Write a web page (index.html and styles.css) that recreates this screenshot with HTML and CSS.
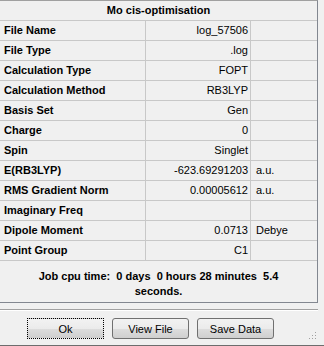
FILE: index.html
```html
<!doctype html>
<html lang="en">
<head>
    <meta charset="UTF-8"/>
    <title>Mo cis-optimisation</title>
    <link rel="stylesheet" href="styles.css">
</head>
<body>
<div class="dialog">
    <div class="panel">
        <div class="title">Mo cis-optimisation</div>
        <div class="props">
            <div class="label">File Name</div><div class="value">log_57506</div><div class="unit"></div>
            <div class="label">File Type</div><div class="value">.log</div><div class="unit"></div>
            <div class="label">Calculation Type</div><div class="value">FOPT</div><div class="unit"></div>
            <div class="label">Calculation Method</div><div class="value">RB3LYP</div><div class="unit"></div>
            <div class="label">Basis Set</div><div class="value">Gen</div><div class="unit"></div>
            <div class="label">Charge</div><div class="value">0</div><div class="unit"></div>
            <div class="label">Spin</div><div class="value">Singlet</div><div class="unit"></div>
            <div class="label">E(RB3LYP)</div><div class="value">-623.69291203</div><div class="unit">a.u.</div>
            <div class="label">RMS Gradient Norm</div><div class="value">0.00005612</div><div class="unit">a.u.</div>
            <div class="label">Imaginary Freq</div><div class="value"></div><div class="unit"></div>
            <div class="label">Dipole Moment</div><div class="value">0.0713</div><div class="unit">Debye</div>
            <div class="label">Point Group</div><div class="value">C1</div><div class="unit"></div>
        </div>
        <p class="cpu">Job cpu time:&nbsp; 0 days&nbsp; 0 hours 28 minutes&nbsp; 5.4 seconds.</p>
    </div>

    <div class="separator"></div>

    <div class="buttons">
        <button class="default">Ok</button>
        <button>View File</button>
        <button>Save Data</button>
    </div>

    <svg class="grip" width="8" height="8" viewBox="0 0 8 8">
        <rect x="6" y="0" width="1" height="1" fill="#a0a0a0"/>
        <rect x="3" y="3" width="1" height="1" fill="#a0a0a0"/>
        <rect x="6" y="3" width="1" height="1" fill="#a0a0a0"/>
        <rect x="0" y="6" width="1" height="1" fill="#a0a0a0"/>
        <rect x="3" y="6" width="1" height="1" fill="#a0a0a0"/>
        <rect x="6" y="6" width="1" height="1" fill="#a0a0a0"/>
    </svg>
</div>
</body>
</html>
```

FILE: styles.css
```css
html,
body {
    margin: 0;
    padding: 0;
    background: #f0f0f0;
}

body {
    font-family: "Liberation Sans", Arial, sans-serif;
    font-size: 11px;
    color: #000;
}

.dialog {
    position: relative;
    width: 324px;
    height: 346px;
    box-sizing: border-box;
    border-bottom: 1px solid #6d6d6d;
}

.panel {
    width: 318px;
    box-sizing: border-box;
    border-top: 1px solid #a0a0a0;
    border-right: 1px solid #828790;
    border-bottom: 1px solid #828790;
}

.title {
    height: 20px;
    box-sizing: border-box;
    border-bottom: 1px solid #c8c8c8;
    font-weight: bold;
    text-align: center;
    line-height: 19px;
}

.props {
    display: grid;
    grid-template-columns: 146px 105px 66px;
    grid-auto-rows: 20px;
}

.props > div {
    box-sizing: border-box;
    border-bottom: 1px solid #c8c8c8;
    line-height: 19px;
    white-space: nowrap;
}

.label {
    border-right: 1px solid #c8c8c8;
    padding-left: 4px;
    font-weight: bold;
}

.value {
    border-right: 1px solid #c8c8c8;
    padding-right: 2px;
    text-align: right;
}

.unit {
    padding-left: 5px;
}

.cpu {
    margin: 0;
    height: 41px;
    box-sizing: border-box;
    padding: 8px 26px 0 26px;
    font-weight: bold;
    text-align: center;
    line-height: 15px;
}

.separator {
    margin-top: 6px;
    width: 318px;
    border-top: 1px solid #a0a0a0;
    border-bottom: 1px solid #ffffff;
}

.buttons {
    display: flex;
    gap: 8px;
    padding: 7px 0 0 27px;
}

.buttons button {
    width: 77px;
    height: 21px;
    padding: 0;
    font-family: "Liberation Sans", Arial, sans-serif;
    font-size: 11px;
    color: #000;
    border: 1px solid #707070;
    border-radius: 3px;
    background: linear-gradient(#f2f2f2 0%, #ebebeb 50%, #dddddd 51%, #cfcfcf 100%);
}

.buttons button.default {
    border: 1px dotted #000;
    border-radius: 0;
}

.grip {
    position: absolute;
    right: 7px;
    bottom: 5px;
}
```
